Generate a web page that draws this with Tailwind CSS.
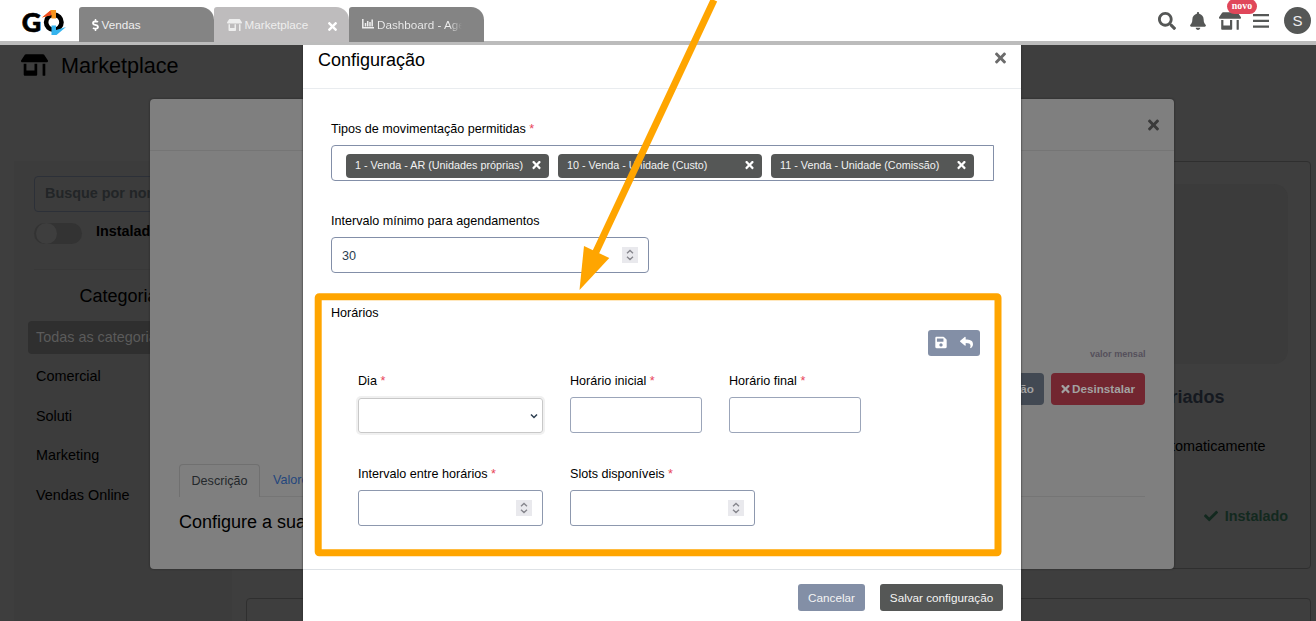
<!DOCTYPE html>
<html lang="pt-BR">
<head>
<meta charset="utf-8">
<title>Marketplace</title>
<script src="https://cdn.jsdelivr.net/npm/@tailwindcss/browser@4"></script>
</head>
<body class="relative h-[621px] w-[1316px] overflow-hidden bg-[#3e3e3e] font-['Liberation_Sans',sans-serif] text-black">

<svg class="hidden">
  <symbol id="times" viewBox="0 0 352 512"><path d="M242.72 256l100.07-100.07c12.28-12.28 12.28-32.19 0-44.48l-22.24-22.24c-12.28-12.28-32.19-12.28-44.48 0L176 189.28 75.93 89.21c-12.28-12.28-32.19-12.28-44.48 0L9.21 111.45c-12.28 12.28-12.28 32.19 0 44.48L109.28 256 9.21 356.07c-12.28 12.28-12.28 32.19 0 44.48l22.24 22.24c12.28 12.28 32.2 12.28 44.48 0L176 322.72l100.07 100.07c12.28 12.28 32.2 12.28 44.48 0l22.24-22.24c12.28-12.28 12.28-32.19 0-44.48L242.72 256z"/></symbol>
  <symbol id="store" viewBox="0 0 640 512"><path d="M320 384H128V224H64v256c0 17.7 14.3 32 32 32h256c17.7 0 32-14.3 32-32V224h-64v160zm314.6-241.8l-85.3-128c-6-8.9-16-14.2-26.7-14.2H117.4c-10.7 0-20.7 5.3-26.6 14.2l-85.3 128c-14.2 21.3 1 49.8 26.6 49.8H608c25.5 0 40.7-28.5 26.6-49.8zM512 496c0 8.800 7.200 16 16 16h32c8.800 0 16-7.200 16-16V224h-64v272z"/></symbol>
  <symbol id="spin" viewBox="0 0 16 16"><rect width="16" height="16" fill="#e9e9ed"/><path d="M5 6.200L8 3.400L11 6.200M5 9.800L8 12.600L11 9.800" fill="none" stroke="#85858c" stroke-width="1.300"/></symbol>
</svg>

<!-- Marketplace page -->
<main class="absolute inset-x-0 top-[45px] h-[576px] overflow-hidden">
  <div class="flex h-[40px] items-center gap-[13px] pl-[21px]">
    <svg class="h-[22px] w-[27px]"><use href="#store"/></svg>
    <h1 class="mt-[2px] text-[21.6px]">Marketplace</h1>
  </div>
  <div class="flex pt-[76px] pl-[14px]">
    <aside class="h-[460px] w-[218px] bg-[#3c3c3c] px-[14px] pt-[15px]">
      <div class="ml-[6px] flex h-[36px] items-center rounded-[4px] border border-[#2c3038] px-[10px] text-[14.4px] font-bold text-[#222527]">Busque por nome</div>
      <div class="mt-[10px] ml-[6px] flex h-[22px] items-center gap-[14px]">
        <span class="flex h-[21px] w-[48px] items-center rounded-full bg-[#333] pl-[2px]"><i class="size-[21px] rounded-full bg-[#3e3e3e]"></i></span>
        <span class="-mt-[2px] text-[14.4px] font-bold">Instalados</span>
      </div>
      <hr class="mt-[25px] ml-[6px] border-[#383838]">
      <h2 class="mt-[13px] text-center text-[18px] leading-[27px]">Categorias</h2>
      <nav class="mt-[11px] text-[14.4px]">
        <div class="flex h-[33px] items-center rounded-[4px] bg-[#2f2f2f] px-[8px] whitespace-nowrap text-[#5b5b5b]">Todas as categorias</div>
        <div class="mt-[3px] flex h-[39.600px] items-center px-[8px]">Comercial</div>
        <div class="flex h-[39.600px] items-center px-[8px]">Soluti</div>
        <div class="flex h-[39.600px] items-center px-[8px]">Marketing</div>
        <div class="flex h-[39.600px] items-center px-[8px]">Vendas Online</div>
      </nav>
    </aside>
    <section class="ml-[14px] w-[1065px]">
      <article class="flex h-[408px] flex-col items-end rounded-[4px] border border-[#2f2f2f] px-[22px] pt-[22px]">
        <div class="h-[180px] w-[200px] rounded-[14px] bg-[#3b3b3b]"></div>
        <h3 class="mt-[20px] mr-[63.500px] text-[18px] leading-[27px] font-bold text-[#151920]">criados</h3>
        <p class="mt-[24px] mr-[22.500px] text-[14.4px] leading-[22px]">automaticamente</p>
        <p class="mt-[48px] flex items-center gap-[7px] text-[14.4px] leading-[22px] font-bold text-[#13291f]"><svg class="size-[14px]" viewBox="0 0 512 512" fill="currentColor"><path d="M173.898 439.404l-166.400-166.400c-9.997-9.997-9.997-26.206 0-36.204l36.203-36.204c9.997-9.998 26.207-9.998 36.204 0L192 312.690 432.095 72.596c9.997-9.997 26.207-9.997 36.204 0l36.203 36.204c9.997 9.997 9.997 26.206 0 36.204l-294.400 294.401c-9.998 9.997-26.207 9.997-36.204-.001z"/></svg>Instalado</p>
      </article>
      <article class="mt-[29px] h-[60px] rounded-[4px] border border-[#2f2f2f]"></article>
    </section>
  </div>
</main>

<!-- App details dialog -->
<section class="absolute top-[99px] left-[150px] flex h-[470px] w-[1024px] flex-col rounded-[4px] bg-[#7f7f7f] shadow-[0_0_2px_#222]">
  <header class="flex h-[52px] items-center justify-end border-b border-[#757575] pr-[15px]"><svg class="h-[16px] w-[11px] fill-[#3a3a3a]"><use href="#times"/></svg></header>
  <div class="flex flex-col px-[29px] pt-[196px]">
    <p class="-mr-[0.500px] text-right text-[9.100px] leading-[14px] font-bold text-[#55505b]">valor mensal</p>
    <div class="mt-[12px] flex justify-end gap-[7px] text-[11.700px] font-bold text-[#a2a2a2]">
      <span class="flex h-[32px] items-center rounded-[4px] bg-[#424953] px-[10px]">Configuração</span>
      <span class="flex h-[32px] w-[94px] items-center justify-center gap-[2px] rounded-[4px] bg-[#722630]"><svg class="h-[12px] w-[9px] fill-current"><use href="#times"/></svg>Desinstalar</span>
    </div>
    <div class="mt-[59px] flex border-b border-[#757575] text-[12.600px]">
      <span class="-mb-px flex h-[33px] w-[81px] items-center justify-center rounded-t-[4px] border border-b-0 border-[#707070] bg-[#7f7f7f] text-[#24282b]">Descrição</span>
      <span class="flex items-center px-[13px] text-[#23467d]">Valores</span>
    </div>
    <p class="mt-[12px] text-[18px] leading-[27px]">Configure a sua</p>
  </div>
</section>

<!-- Settings dialog -->
<section class="absolute top-[30px] left-[303px] flex h-[591px] w-[718px] flex-col bg-white text-[12.600px] shadow-[0_0_2px_#222]">
  <header class="flex h-[59px] shrink-0 items-center justify-between border-b border-[#e9ecef] pr-[15px] pl-[15px]">
    <h2 class="mt-[2px] text-[18px]">Configuração</h2>
    <svg class="-mt-[3px] h-[16px] w-[11px] fill-[#6b6b6b]"><use href="#times"/></svg>
  </header>
  <div class="flex h-[480px] shrink-0 flex-col px-[28px] pt-[31px]">
    <label class="leading-[19px]">Tipos de movimentação permitidas <span class="text-[#e8455a]">*</span></label>
    <div class="mt-[6px] flex h-[36px] w-[663px] items-center gap-[9px] rounded-l-[4px] border border-[#838fa8] pt-[5px] pl-[14px] text-[10.800px] text-[#f2f2f2]">
      <span class="flex h-[24px] w-[203px] items-center justify-between rounded-[4px] bg-[#555756] pr-[8px] pl-[9px]">1 - Venda - AR (Unidades próprias)<svg class="-mt-px h-[12px] w-[9px] fill-white"><use href="#times"/></svg></span>
      <span class="flex h-[24px] w-[204px] items-center justify-between rounded-[4px] bg-[#555756] pr-[8px] pl-[9px]">10 - Venda - Unidade (Custo)<svg class="-mt-px h-[12px] w-[9px] fill-white"><use href="#times"/></svg></span>
      <span class="flex h-[24px] w-[203px] items-center justify-between rounded-[4px] bg-[#555756] pr-[8px] pl-[9px]">11 - Venda - Unidade (Comissão)<svg class="-mt-px h-[12px] w-[9px] fill-white"><use href="#times"/></svg></span>
    </div>
    <label class="mt-[31px] leading-[19px]">Intervalo mínimo para agendamentos</label>
    <div class="mt-[6px] flex h-[36px] w-[318px] items-center justify-between rounded-[4px] border border-[#838fa8] px-[10px] text-[#2c3e50]"><span class="mt-[2px]">30</span><svg class="size-[16px]"><use href="#spin"/></svg></div>
    <p class="mt-[31px] leading-[19px]">Horários</p>
    <div class="mt-[7px] mr-[13px] flex h-[26px] w-[52px] items-center gap-[13px] self-end rounded-[3px] bg-[#838fa6] pl-[7px] text-white">
      <svg class="-mt-px h-[13px] w-[12px]" viewBox="0 0 448 512" fill="currentColor"><path d="M433.941 129.941l-83.882-83.882A48 48 0 0 0 316.118 32H48C21.490 32 0 53.490 0 80v352c0 26.510 21.490 48 48 48h352c26.510 0 48-21.490 48-48V163.882a48 48 0 0 0-14.059-33.941zM224 416c-35.346 0-64-28.654-64-64 0-35.346 28.654-64 64-64s64 28.654 64 64c0 35.346-28.654 64-64 64zm96-304.520V212c0 6.627-5.373 12-12 12H76c-6.627 0-12-5.373-12-12V108c0-6.627 5.373-12 12-12h228.520c3.183 0 6.235 1.264 8.485 3.515l3.480 3.480A11.996 11.996 0 0 1 320 111.480z"/></svg>
      <svg class="-mt-px size-[13px]" viewBox="0 0 512 512" fill="currentColor"><path d="M8.309 189.836L184.313 37.851C199.719 24.546 224 35.347 224 56.015v80.053c160.629 1.839 288 34.032 288 186.258 0 61.441-39.581 122.309-83.333 154.132-13.653 9.931-33.111-2.533-28.077-18.631 45.344-145.012-21.507-183.510-176.590-185.742V360c0 20.700-24.300 31.453-39.687 18.164l-176.004-152c-11.071-9.562-11.086-26.753 0-36.328z"/></svg>
    </div>
    <div class="mt-[16px] ml-[27px] flex h-[62px] gap-[27px]">
      <div class="w-[185px]"><label class="block leading-[19px]">Dia <span class="text-[#e8455a]">*</span></label>
        <div class="mt-[7px] flex h-[35px] items-center justify-end rounded-[3px] border border-[#c8c8c8] pr-[4px] shadow-[0_0_0_2px_#f0f0f0]"><svg class="size-[8px]" viewBox="0 0 8 8"><path d="M1 2.500L4 5.500L7 2.500" fill="none" stroke="#2c3e50" stroke-width="1.500"/></svg></div></div>
      <div class="w-[132px]"><label class="block leading-[19px]">Horário inicial <span class="text-[#e8455a]">*</span></label><div class="mt-[6.400px] h-[36px] rounded-[3px] border border-[#9ba5b9]"></div></div>
      <div class="w-[132px]"><label class="block leading-[19px]">Horário final <span class="text-[#e8455a]">*</span></label><div class="mt-[6.400px] h-[36px] rounded-[3px] border border-[#9ba5b9]"></div></div>
    </div>
    <div class="mt-[31px] ml-[27px] flex gap-[27px]">
      <div class="w-[185px]"><label class="block leading-[19px]">Intervalo entre horários <span class="text-[#e8455a]">*</span></label><div class="mt-[6px] flex h-[36px] items-center justify-end rounded-[3px] border border-[#8d98ae] pr-[10px]"><svg class="size-[16px]"><use href="#spin"/></svg></div></div>
      <div class="w-[185px]"><label class="block leading-[19px]">Slots disponíveis <span class="text-[#e8455a]">*</span></label><div class="mt-[6px] flex h-[36px] items-center justify-end rounded-[3px] border border-[#8d98ae] pr-[10px]"><svg class="size-[16px]"><use href="#spin"/></svg></div></div>
    </div>
  </div>
  <footer class="flex items-start justify-end gap-[15px] border-t border-[#dee2e6] pt-[14px] pr-[18px] text-[11.700px] text-[#f4f4f4]">
    <button class="h-[27px] w-[67px] rounded-[3px] bg-[#838fa6]">Cancelar</button>
    <button class="h-[27px] w-[123px] rounded-[3px] bg-[#555756]">Salvar configuração</button>
  </footer>
</section>

<!-- Top bar -->
<header class="absolute inset-x-0 top-0 flex h-[45px] border-b-4 border-[#bcbcbc] bg-white">
  <svg class="ml-[20px] h-[41px] w-[59px] shrink-0" viewBox="20 0 59 41">
    <text x="21.800" y="31.500" font-family="Lato" font-weight="900" font-size="26" textLength="19.500" lengthAdjust="spacingAndGlyphs" fill="#000" stroke="#000" stroke-width=".6">G</text>
    <circle cx="53.800" cy="22.300" r="7.700" fill="none" stroke="#000" stroke-width="4.600"/>
    <path d="M42 17.500L51 10h5v8.500h-4.500v-3.500z" fill="#f7941d"/><path d="M42 17.500L50.500 10.500L51.500 15z" fill="#ef4b23"/>
    <path d="M66 27L56.500 35h-5v-9.500h4.500V30z" fill="#35b4ee"/>
  </svg>
  <div class="flex pt-[7px] text-[11.700px] text-[#eee]">
    <div class="flex h-[35px] w-[135px] items-center gap-[2.500px] rounded-tl-[3px] rounded-tr-[13px] bg-[#848484] pl-[13px]"><svg class="h-[12px] w-[7px]" viewBox="0 0 288 512" fill="#fff"><path d="M209.200 233.400l-108-31.600C88.700 198.200 80 186.500 80 173.500c0-16.300 13.200-29.500 29.500-29.500h66.300c12.200 0 24.200 3.700 34.200 10.500 6.100 4.100 14.300 3.100 19.500-2l34.800-34c7.100-6.900 6.100-18.400-1.800-24.500C238 74.800 207.400 64.100 176 64V16c0-8.800-7.200-16-16-16h-32c-8.800 0-16 7.200-16 16v48h-2.500C45.800 64-5.400 118.700.5 183.600c4.200 46.100 39.400 83.600 83.800 96.600l102.500 30c12.500 3.700 21.200 15.300 21.200 28.300 0 16.300-13.200 29.500-29.500 29.500h-66.300C100 368 88 364.300 78 357.500c-6.100-4.100-14.300-3.100-19.500 2l-34.800 34c-7.100 6.900-6.100 18.400 1.800 24.500 24.500 19.200 55.100 29.900 86.500 30v48c0 8.800 7.200 16 16 16h32c8.800 0 16-7.200 16-16v-48.200c46.600-.9 90.300-28.600 105.700-72.700 21.500-61.600-14.600-124.800-72.500-141.700z"/></svg>Vendas</div>
    <div class="flex h-[35px] w-[135px] items-center gap-[2.500px] rounded-tl-[3px] rounded-tr-[13px] bg-[#bebcbd] pl-[13px]"><svg class="h-[12px] w-[15px] fill-[#eee]"><use href="#store"/></svg>Marketplace<svg class="mt-[4px] ml-[17px] h-[13px] w-[9px] fill-white"><use href="#times"/></svg></div>
    <div class="flex h-[35px] w-[135px] items-center gap-[3px] rounded-tl-[3px] rounded-tr-[13px] bg-[#848484] pl-[13px]"><svg class="-mt-[2px] size-[12px]" viewBox="0 0 12 12" fill="none" stroke="#eee" stroke-width="1.500"><path d="M.8 1V9.700H12M3.500 5V8.500M5.700 3V8.500M8 4V8.500M10.200 1.500V8.500"/></svg><span class="w-[85px] overflow-hidden bg-linear-to-r from-[#eee] from-85% to-transparent to-100% bg-clip-text whitespace-nowrap text-transparent">Dashboard - Age</span></div>
  </div>
  <div class="ml-auto flex items-center pr-[5px] text-[#555756]">
    <svg class="mr-[14px] size-[18px]" viewBox="0 0 512 512" fill="currentColor"><path d="M505 442.700L405.300 343c-4.500-4.500-10.600-7-17-7H372c27.600-35.300 44-79.700 44-128C416 93.100 322.900 0 208 0S0 93.100 0 208s93.100 208 208 208c48.300 0 92.700-16.400 128-44v16.300c0 6.400 2.500 12.500 7 17l99.700 99.700c9.400 9.400 24.600 9.400 33.900 0l28.300-28.300c9.400-9.400 9.400-24.600.1-34zM208 336c-70.700 0-128-57.200-128-128 0-70.700 57.200-128 128-128 70.700 0 128 57.200 128 128 0 70.700-57.200 128-128 128z"/></svg>
    <svg class="mr-[13px] h-[18px] w-[16px]" viewBox="0 0 448 512" fill="currentColor"><path d="M224 512c35.320 0 63.970-28.650 63.970-64H160.030c0 35.350 28.650 64 63.970 64zm215.390-149.710c-19.320-20.760-55.470-51.990-55.470-154.290 0-77.700-54.480-139.900-127.940-155.160V32c0-17.670-14.320-32-31.980-32s-31.980 14.330-31.980 32v20.840C118.560 68.100 64.080 130.300 64.080 208c0 102.300-36.150 133.530-55.470 154.290-6 6.450-8.660 14.160-8.610 21.710.11 16.400 12.980 32 32.100 32h383.800c19.120 0 32-15.600 32.100-32 .05-7.550-2.610-15.270-8.610-21.710z"/></svg>
    <div class="relative mr-[12px]"><svg class="h-[18px] w-[22px] fill-current"><use href="#store"/></svg>
      <span class="absolute -top-[13px] left-[8px] flex h-[15px] w-[30px] items-center justify-center rounded-full bg-[#e0475a] font-['Liberation_Serif',serif] text-[9.900px] font-bold text-white">novo</span></div>
    <svg class="mr-[15px] h-[14px] w-[16px]" viewBox="0 0 16 14" fill="currentColor"><path d="M0 0h16v2.300H0zM0 5.800h16v2.300H0zM0 11.500h16v2.300H0z"/></svg>
    <span class="flex size-[27px] items-center justify-center rounded-full bg-[#555756] pt-px text-[15px] text-[#eee]">S</span>
  </div>
</header>

<!-- Annotation: arrow and highlighted area -->
<svg class="pointer-events-none absolute inset-0" width="1316" height="621">
  <rect x="318.200" y="296.800" width="679.800" height="256" rx="1" fill="none" stroke="#ffa500" stroke-width="7" stroke-linejoin="round"/>
  <path d="M714 0L594 256" stroke="#ffa500" stroke-width="7"/>
  <path d="M579.500 290L584 246L609.300 258z" fill="#ffa500"/>
</svg>
</body>
</html>
